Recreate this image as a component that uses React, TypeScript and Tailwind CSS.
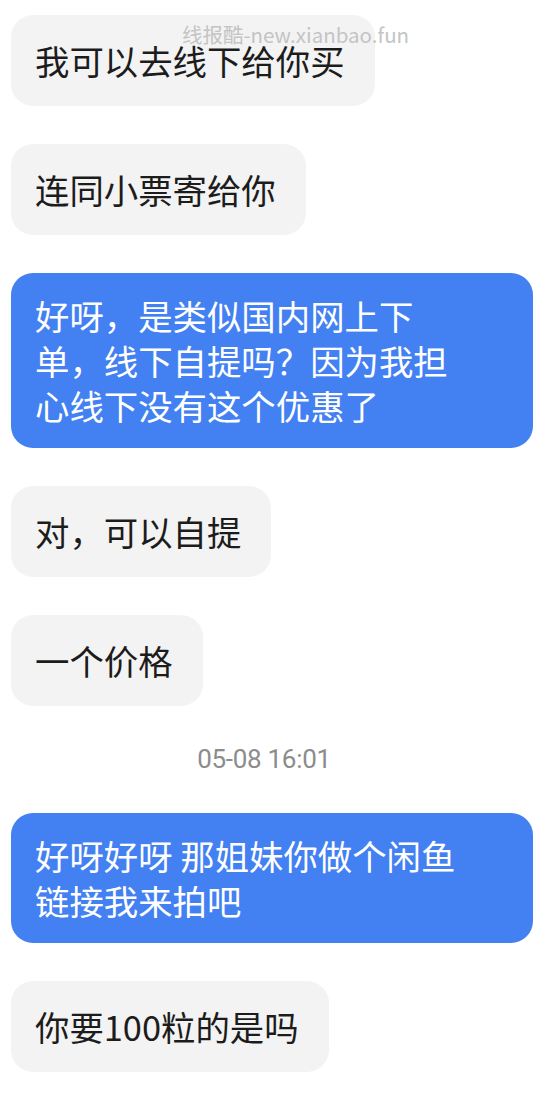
import React from "react";

const font = { fontFamily: '"Noto Sans CJK SC", "Noto Sans", Roboto, sans-serif' };

function Left({ text }: { text: string }) {
  return (
    <div className="rounded-[22px] bg-[#f3f3f3] pl-[24px] pr-[30px] py-[23px] text-[34.4px] leading-[45px] text-[#1c1c1c] whitespace-nowrap">
      {text}
    </div>
  );
}

function Right({ lines }: { lines: string[] }) {
  return (
    <div className="w-full rounded-[22px] bg-[#4381f2] px-[24px] py-[20px] text-[34.4px] leading-[45px] text-white">
      {lines.map((l, i) => (
        <div key={i} className="whitespace-pre">
          {l}
        </div>
      ))}
    </div>
  );
}

export default function App() {
  return (
    <div className="relative min-h-[1099px] w-[540px] bg-white overflow-hidden" style={font}>
      <div className="flex flex-col items-start gap-[38px] px-[11px] pr-[7px] pt-[15px]">
        <Left text="我可以去线下给你买" />
        <Left text="连同小票寄给你" />
        <Right lines={["好呀，是类似国内网上下", "单，线下自提吗？因为我担", "心线下没有这个优惠了"]} />
        <Left text="对，可以自提" />
        <Left text="一个价格" />
        <div className="flex w-full justify-center pr-[16px] text-[26px] leading-[31px] tracking-[-0.3px] text-[#8c8c8c]" style={{ fontFamily: 'Roboto, "Noto Sans", sans-serif' }}>
          05-08 16:01
        </div>
        <Right lines={["好呀好呀 那姐妹你做个闲鱼", "链接我来拍吧"]} />
        <Left text="你要100粒的是吗" />
      </div>
      <div className="absolute left-[182px] top-[21px] text-[20.5px] leading-[26px] text-[#c4c4c4] whitespace-nowrap">
        线报酷-new.xianbao.fun
      </div>
    </div>
  );
}
